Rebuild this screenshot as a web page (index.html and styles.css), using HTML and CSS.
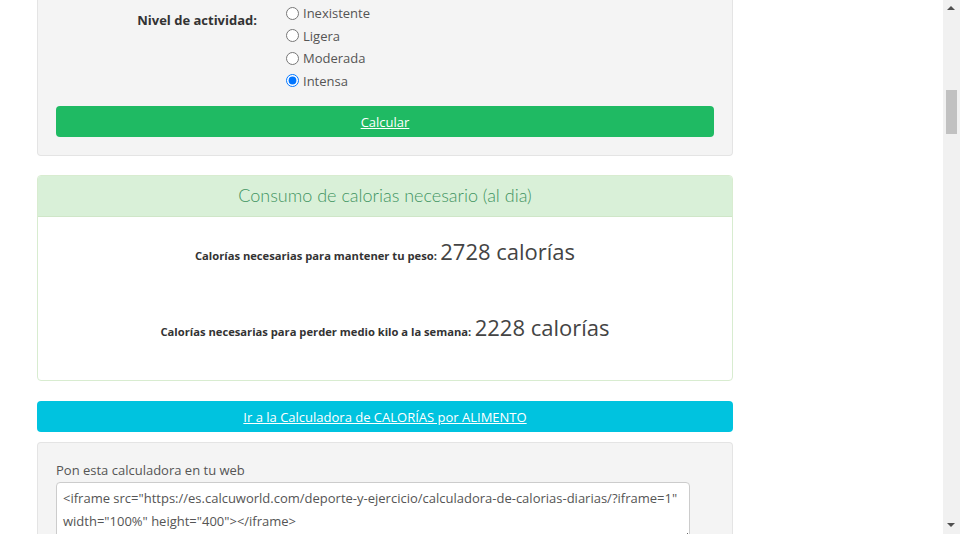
FILE: index.html
```html
<!DOCTYPE html>
<html lang="es">
<head>
<meta charset="utf-8">
<title>Calculadora de calorías diarias</title>
<link rel="stylesheet" href="styles.css">
</head>
<body>
<div class="page">
  <main class="content">
    <section class="card form-card">
      <div class="form-row">
        <div class="form-label">Nivel de actividad:</div>
        <div class="radios">
          <label class="radio"><input type="radio" name="act"> Inexistente</label>
          <label class="radio"><input type="radio" name="act"> Ligera</label>
          <label class="radio"><input type="radio" name="act"> Moderada</label>
          <label class="radio"><input type="radio" name="act" checked> Intensa</label>
        </div>
      </div>
      <a class="btn btn-green" href="#">Calcular</a>
    </section>

    <section class="result">
      <div class="result-head">Consumo de calorias necesario (al dia)</div>
      <div class="result-body">
        <p class="result-line"><span class="rl-label">Calorías necesarias para mantener tu peso:</span> <span class="rl-value">2728 calorías</span></p>
        <p class="result-line"><span class="rl-label">Calorías necesarias para perder medio kilo a la semana:</span> <span class="rl-value">2228 calorías</span></p>
      </div>
    </section>

    <a class="btn btn-cyan" href="#">Ir a la Calculadora de CALORÍAS por ALIMENTO</a>

    <section class="card embed-card">
      <div class="embed-label">Pon esta calculadora en tu web</div>
      <textarea class="embed-code">&lt;iframe src="https://es.calcuworld.com/deporte-y-ejercicio/calculadora-de-calorias-diarias/?iframe=1" width="100%" height="400"&gt;&lt;/iframe&gt;</textarea>
    </section>
  </main>
  <div class="scrollbar">
    <div class="sb-arrow sb-up"></div>
    <div class="sb-track"><div class="sb-thumb"></div></div>
    <div class="sb-arrow sb-down"></div>
  </div>
</div>
</body>
</html>
```

FILE: styles.css
```css
* { box-sizing: border-box; }
html, body { margin: 0; padding: 0; height: 534px; overflow: hidden; background: #fff; }
body { font-family: "Open Sans", "Liberation Sans", sans-serif; color: #555; font-size: 13px; }

.page { display: flex; height: 534px; }
.content { flex: 1; padding-left: 37px; padding-right: 210px; display: flex; flex-direction: column; }
.content > * { flex-shrink: 0; width: 696px; }

.card {
  background: #f4f4f4;
  border: 1px solid #e4e4e4;
  border-radius: 4px;
}
.form-card {
  border-top: none;
  border-radius: 0 0 4px 4px;
  padding: 2px 18px 18px 18px;
  height: 156px;
  display: flex;
  flex-direction: column;
}
.form-row { display: flex; gap: 29px; }
.form-label {
  width: 201px;
  text-align: right;
  font-weight: 700;
  font-size: 13px;
  color: #333;
  padding-top: 9px;
}
.radios { display: flex; flex-direction: column; }
.radio { display: flex; align-items: center; height: 22.5px; color: #555; line-height: 20px; font-size: 13px; }
.radio input { margin: 0 4px 0 0; width: 13px; height: 13px; }

.btn {
  display: flex;
  align-items: center;
  justify-content: center;
  height: 31px;
  border-radius: 4px;
  color: #fff;
  text-decoration: underline;
  font-size: 13px;
}
.btn-green { background: #1fba63; margin-top: 14px; }
.btn-cyan { background: #00c3df; margin-top: 20px; }

.result {
  margin-top: 19px;
  border: 1px solid #d8ecd0;
  border-radius: 4px;
  background: #fff;
  height: 206px;
}
.result-head {
  background: #d9f0d8;
  height: 41px;
  border-bottom: 1px solid #cfe6c8;
  display: flex;
  align-items: center;
  justify-content: center;
  font-family: "Lato", "Open Sans", sans-serif;
  font-weight: 300;
  font-size: 18px;
  color: #3f9462;
  border-radius: 3px 3px 0 0;
  padding-bottom: 2px;
}
.result-body { padding-top: 19px; }
.result-line {
  margin: 0 0 46px 0;
  text-align: center;
  color: #333;
  line-height: 30px;
}
.result-line + .result-line { margin-top: -5px; }
.rl-label { font-size: 11.2px; font-weight: 700; color: #333; }
.rl-value { font-size: 22px; color: #444; }

.embed-card {
  margin-top: 10px;
  padding: 18px 44px 0 18px;
  flex: 1 1 auto;
  border-bottom: none;
  border-radius: 4px 4px 0 0;
}
.embed-label { color: #555; font-size: 13px; line-height: 18px; margin-top: 0; }
.embed-code {
  display: block;
  width: 634px;
  height: 60px;
  margin-top: 3px;
  border: 1px solid #ccc;
  border-radius: 4px;
  background: #fff;
  padding: 4px 6px;
  font-family: "Open Sans", "Liberation Sans", sans-serif;
  font-size: 13px;
  line-height: 23px;
  color: #555;
  resize: vertical;
}

.scrollbar {
  width: 17px;
  background: #f1f1f1;
  display: flex;
  flex-direction: column;
  flex-shrink: 0;
}
.sb-arrow { height: 17px; position: relative; }
.sb-up::after, .sb-down::after {
  content: "";
  position: absolute;
  left: 4px;
  width: 0; height: 0;
  border-left: 4px solid transparent;
  border-right: 4px solid transparent;
}
.sb-up::after { top: 6px; border-bottom: 4px solid #505050; }
.sb-down::after { top: 6px; border-top: 4px solid #505050; }
.sb-track { flex: 1; padding: 73px 3px 0 3px; }
.sb-thumb { height: 44px; background: #c1c1c1; }
```
